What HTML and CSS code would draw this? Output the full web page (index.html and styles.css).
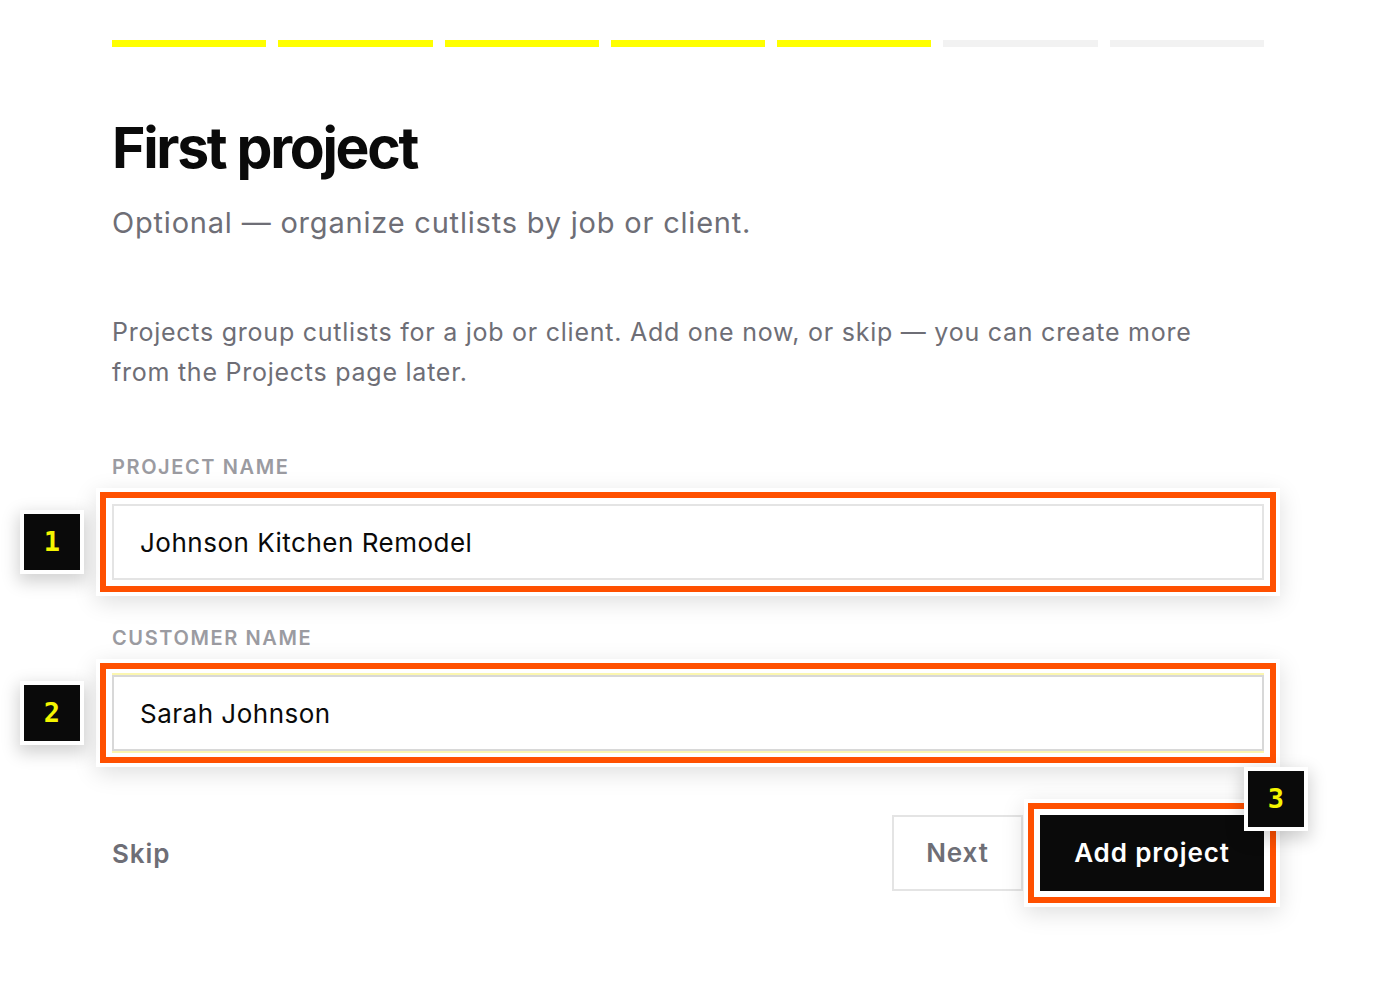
FILE: index.html
```
<!DOCTYPE html>
<html>
<head>
    <meta charset="utf-8">
    <title>First project</title>
    <link rel="stylesheet" href="styles.css">
</head>
<body>
    <div class="wrap">
        <!-- step progress -->
        <div class="steps">
            <span class="on"></span>
            <span class="on"></span>
            <span class="on"></span>
            <span class="on"></span>
            <span class="on"></span>
            <span></span>
            <span></span>
        </div>

        <h1>First project</h1>
        <p class="sub">Optional — organize cutlists by job or client.</p>

        <p class="intro">Projects group cutlists for a job or client. Add one now, or skip — you can create more from the Projects page later.</p>

        <div class="field">
            <label>Project name</label>
            <div class="box">
                <input type="text" value="Johnson Kitchen Remodel">
                <div class="mark"></div>
                <div class="badge">1</div>
            </div>
        </div>

        <div class="field">
            <label>Customer name</label>
            <div class="box">
                <input type="text" class="focus" value="Sarah Johnson">
                <div class="mark"></div>
                <div class="badge">2</div>
            </div>
        </div>

        <div class="actions">
            <a href="javascript:;" class="skip">Skip</a>
            <div class="btns">
                <a href="javascript:;" class="next">Next</a>
                <div class="box">
                    <a href="javascript:;" class="add">Add project</a>
                    <div class="mark"></div>
                    <div class="badge b3">3</div>
                </div>
            </div>
        </div>
    </div>
</body>
</html>
```

FILE: styles.css
```
*{
    margin: 0;
    padding: 0;
    box-sizing: border-box;
}
body{
    background: #fff;
    font-family: Inter, "Noto Sans", sans-serif;
    color: #0a0a0a;
}
.wrap{
    width: 1152px;
    margin-left: 112px;
    padding-top: 40px;
    padding-bottom: 100px;
}
.steps{
    display: flex;
    gap: 12px;
}
.steps span{
    flex: 1;
    height: 7px;
    background: #f2f2f2;
}
.steps .on{
    background: #ffff00;
}
h1{
    margin-top: 65px;
    font-size: 57px;
    line-height: 72px;
    font-weight: 700;
    letter-spacing: -2.3px;
}
.sub{
    margin-top: 19px;
    font-size: 29px;
    line-height: 40px;
    letter-spacing: 0.8px;
    color: #6e6e76;
}
.intro{
    margin-top: 69px;
    font-size: 25px;
    line-height: 40px;
    letter-spacing: 0.75px;
    color: #6e6e76;
    width: 1110px;
}
.field{
    margin-top: 64px;
}
.field + .field{
    margin-top: 47px;
}
.field label{
    display: block;
    font-size: 20px;
    line-height: 22px;
    font-weight: 600;
    letter-spacing: 1.6px;
    text-transform: uppercase;
    color: #9b9ba1;
    margin-bottom: 26px;
}
.box{
    position: relative;
}
.box input{
    display: block;
    width: 100%;
    height: 76px;
    border: 2px solid #e4e4e4;
    padding: 0 26px;
    font-family: Inter, "Noto Sans", sans-serif;
    font-size: 26px;
    letter-spacing: 0.5px;
    color: #0a0a0a;
    background: #fff;
    outline: none;
}
.box input.focus{
    border-color: #d8d8d8;
    box-shadow: 0 -2px 0 #fbf6b0, 0 2px 0 #fbf6b0;
}
/* highlight frame over a control */
.mark{
    position: absolute;
    top: -12px;
    left: -12px;
    right: -12px;
    bottom: -12px;
    border: 6px solid #ff5000;
    outline: 4px solid #fff;
    box-shadow: 0 6px 22px 4px rgba(0,0,0,0.13);
    pointer-events: none;
}
.badge{
    position: absolute;
    top: 6px;
    left: -92px;
    width: 64px;
    height: 64px;
    background: #0a0a0a;
    border: 4px solid #fff;
    box-shadow: 0 6px 16px 2px rgba(0,0,0,0.18);
    color: #f5f500;
    font-family: "DejaVu Sans Mono", monospace;
    font-weight: 700;
    font-size: 27px;
    line-height: 56px;
    text-align: center;
}
.actions{
    margin-top: 64px;
    display: flex;
    align-items: center;
    justify-content: space-between;
}
.actions a{
    text-decoration: none;
    font-weight: 600;
    font-size: 26px;
    letter-spacing: 0.9px;
}
.skip{
    color: #6e6e76;
}
.btns{
    display: flex;
    gap: 17px;
}
.next{
    display: block;
    width: 131px;
    height: 76px;
    line-height: 72px;
    text-align: center;
    border: 2px solid #e4e4e4;
    color: #6e6e76;
}
.add{
    display: block;
    width: 224px;
    height: 76px;
    line-height: 76px;
    text-align: center;
    background: #0a0a0a;
    color: #fff;
}
.b3{
    top: -48px;
    left: auto;
    right: -44px;
}
```
